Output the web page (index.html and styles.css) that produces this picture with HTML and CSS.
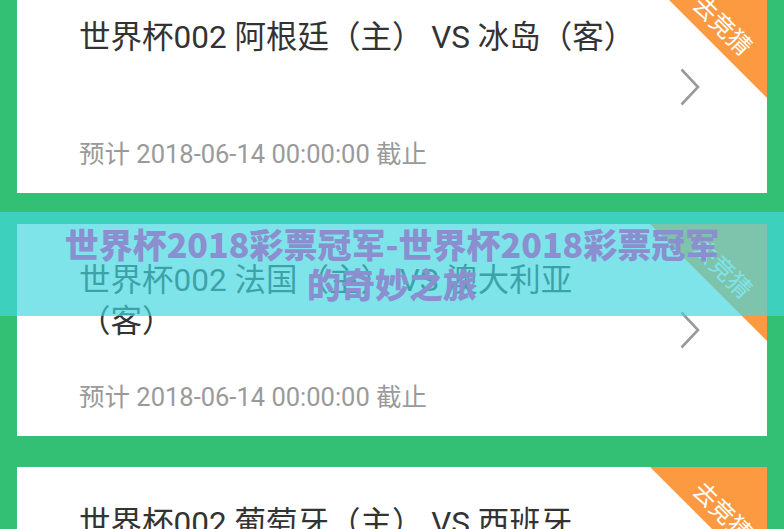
FILE: index.html
```html
<!DOCTYPE html>
<html lang="zh-CN">
	<head>
		<meta charset="UTF-8" />
		<meta name="viewport" content="width=device-width, initial-scale=1.0" />
		<title>世界杯2018彩票冠军</title>
		<link rel="stylesheet" href="styles.css">
	</head>
	<body>
		<ul class="match_list">
			<li class="match">
				<div class="match_info">
					<h3 class="match_title">世界杯002 阿根廷（主） VS 冰岛（客）</h3>
					<p class="match_time">预计 2018-06-14 00:00:00 截止</p>
				</div>
				<svg class="arrow" viewBox="0 0 20 38" width="20" height="38"><polyline points="1.5,1.5 18,19 1.5,36.5" /></svg>
				<span class="corner"><em>去竞猜</em></span>
			</li>
			<li class="match">
				<div class="match_info">
					<h3 class="match_title">世界杯002 法国（主） VS 澳大利亚（客）</h3>
					<p class="match_time">预计 2018-06-14 00:00:00 截止</p>
				</div>
				<svg class="arrow" viewBox="0 0 20 38" width="20" height="38"><polyline points="1.5,1.5 18,19 1.5,36.5" /></svg>
				<span class="corner"><em>去竞猜</em></span>
			</li>
			<li class="match">
				<div class="match_info">
					<h3 class="match_title">世界杯002 葡萄牙（主） VS 西班牙（客）</h3>
					<p class="match_time">预计 2018-06-14 00:00:00 截止</p>
				</div>
				<svg class="arrow" viewBox="0 0 20 38" width="20" height="38"><polyline points="1.5,1.5 18,19 1.5,36.5" /></svg>
				<span class="corner"><em>去竞猜</em></span>
			</li>
		</ul>

		<div class="banner">
			<h1>世界杯2018彩票冠军-世界杯2018彩票冠军的奇妙之旅</h1>
		</div>
	</body>
</html>
```

FILE: styles.css
```css
* {
	padding: 0;
	margin: 0;
	border: 0;
	box-sizing: border-box;
}
li {
	list-style: none;
}

body {
	background-color: #34c074;
	font-family: Roboto, "Noto Sans CJK SC", sans-serif;
	overflow: hidden;
}

.match_list {
	display: flex;
	flex-direction: column;
	gap: 31px;
	margin-top: -19px;
	padding: 0 17px;
}

.match {
	position: relative;
	display: flex;
	align-items: center;
	height: 212px;
	background-color: #fff;
	overflow: hidden;
}

.match_info {
	display: flex;
	flex-direction: column;
	justify-content: space-between;
	flex: 1;
	height: 100%;
	padding: 36px 0 24px 62px;
}

.match_title {
	font-size: 31.5px;
	font-weight: normal;
	line-height: 41px;
	color: #333;
}

.match_time {
	font-size: 25.5px;
	line-height: 30px;
	color: #9a9a9a;
}

.arrow {
	flex: none;
	margin: 0 67px 0 45px;
	fill: none;
	stroke: #9a9a9a;
	stroke-width: 2.6;
}

/* 오른쪽 위 주황 삼각형 */
.corner {
	position: absolute;
	top: 0;
	right: 0;
	width: 117px;
	height: 117px;
	background-color: #fb9a40;
	clip-path: polygon(0 0, 100% 0, 100% 100%);
}

.corner > em {
	position: absolute;
	left: 72px;
	top: 45px;
	transform: translate(-50%, -50%) rotate(45deg);
	font-style: normal;
	font-size: 24px;
	line-height: 1;
	white-space: nowrap;
	color: #fff;
}

.banner {
	position: absolute;
	left: 0;
	top: 212px;
	width: 100%;
	height: 104px;
	padding: 12px 50px 0;
	background-color: rgba(67, 215, 224, 0.68);
}

.banner > h1 {
	font-family: "Noto Sans CJK SC", sans-serif;
	font-size: 34px;
	font-weight: 900;
	line-height: 40px;
	text-align: center;
	color: #8b8ecf;
}
```
